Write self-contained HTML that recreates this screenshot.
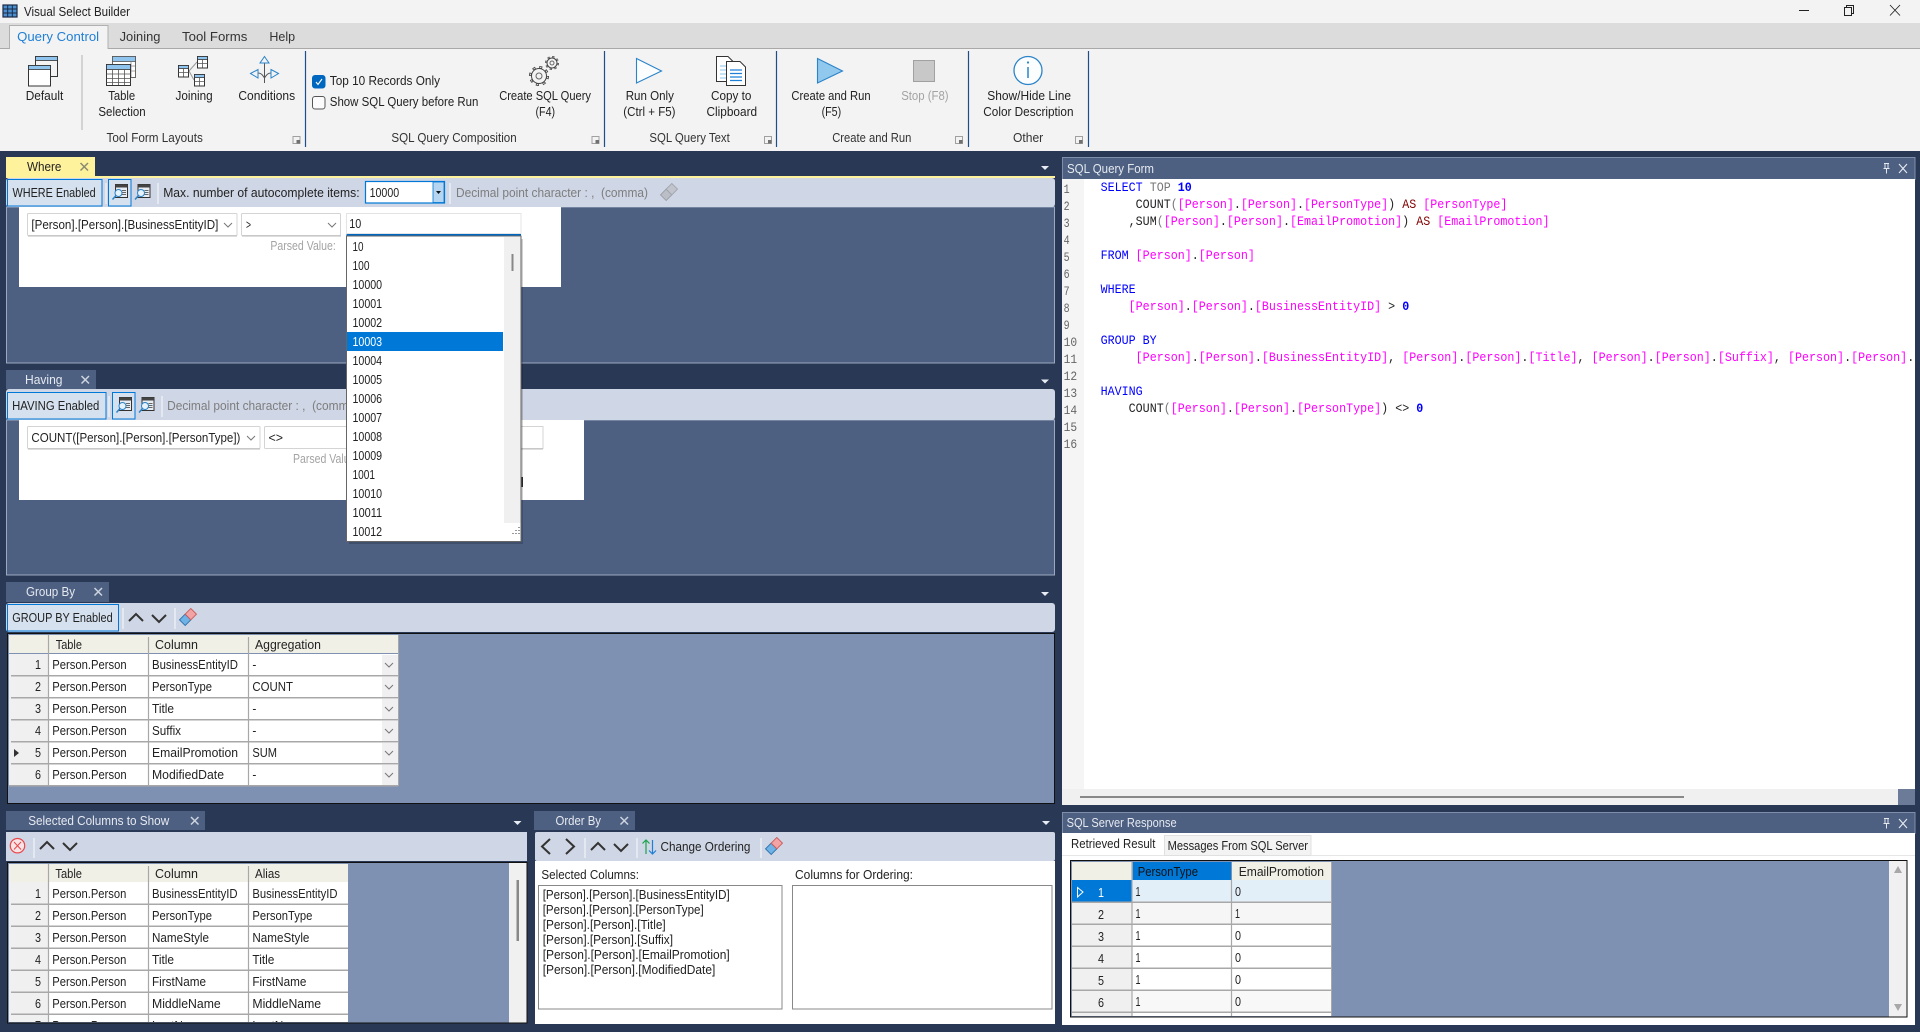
<!DOCTYPE html>
<html><head><meta charset="utf-8"><title>Visual Select Builder</title>
<style>
html,body{margin:0;padding:0;width:1920px;height:1032px;overflow:hidden;background:#293955}
svg{display:block}
text{font-family:"Liberation Sans",sans-serif;font-size:13px;fill:#222;white-space:pre}
.w{fill:#e6e9f0}.gy{fill:#7d7d7d}.lg{fill:#a3a3a3}
.mono text,.mono tspan{font-family:"Liberation Mono",monospace}
.k{fill:#0000ff}.m{fill:#ff00ff}.r{fill:#800000}.g{fill:#777}.d{fill:#222}
</style></head><body>
<svg xmlns="http://www.w3.org/2000/svg" width="1920" height="1032" viewBox="0 0 1920 1032">
<defs>
<clipPath id="ed"><rect x="1062" y="179" width="853" height="610"/></clipPath>
<clipPath id="sc"><rect x="8" y="863" width="518" height="159"/></clipPath>
<clipPath id="rg"><rect x="1072" y="861" width="834" height="155"/></clipPath>
<path id="ch" d="M-4-2L0 2L4-2" fill="none" stroke="#777" stroke-width="1"/>
<path id="cu" d="M-7 3L0-4L7 3" fill="none" stroke="#333" stroke-width="2"/>
<path id="cd" d="M-7-3L0 4L7-3" fill="none" stroke="#333" stroke-width="2"/>
<path id="da" d="M-4-2H4L0 2Z" fill="#e8ecf3"/>
<g id="lau"><rect x="-3.500" y="-3.500" width="7" height="7" fill="none" stroke="#a0a0a0"/><rect x="0" y="0" width="3.500" height="3.500" fill="#707070"/></g>
<g id="srch"><rect x="3.500" y=".5" width="12" height="13" fill="#e8ecf3" stroke="#333"/><rect x="3.500" y=".5" width="12" height="3" fill="#444"/><path d="M10 6.500h4M10 8.500h4M10 10.500h4" stroke="#666"/><circle cx="6.500" cy="9" r="3.500" fill="#e8f2fb" stroke="#2b84c8"/><path d="M4 11.500L.5 15.500" stroke="#2b84c8" stroke-width="1.500"/></g>
<g id="er"><g transform="rotate(-45)"><rect x="-8" y="-4" width="8" height="8" fill="#6fb2e6" stroke="#2b6fa8" stroke-width=".9"/><rect x="0" y="-4" width="8" height="8" fill="#f2a3a3" stroke="#c85a5a" stroke-width=".9"/></g></g>
<g id="tb"><rect x=".5" y=".5" width="10" height="11.500" fill="#fff" stroke="#333"/><rect x=".5" y=".5" width="10" height="3" fill="#8ec4ee" stroke="#333" stroke-width=".8"/><path d="M.5 7.500h10M5.500 3.500v8" stroke="#555" stroke-width=".8"/></g>
</defs>

<!-- title bar -->
<rect width="1920" height="23" fill="#f3f3f3"/>
<rect x="3" y="5" width="14" height="12" fill="#4a90d0" stroke="#1b2a44" stroke-width="1.200"/>
<path d="M3 9h14M3 13h14M7.700 5v12M12.300 5v12" stroke="#1b2a44" stroke-width="1"/>
<text x="24" y="16" textLength="106" lengthAdjust="spacingAndGlyphs">Visual Select Builder</text>
<path d="M1799 10.500h10" stroke="#222" stroke-width="1"/>
<path d="M1844.500 7.500h7v8h-7zM1846.500 7.500v-2h7v8h-2" fill="none" stroke="#222"/>
<path d="M1890 5L1900 15.500M1900 5L1890 15.500" stroke="#222" stroke-width=".9"/>

<!-- tab strip -->
<rect y="23" width="1920" height="25" fill="#dcdcdc"/>
<rect y="48" width="1920" height="1" fill="#a9a9a9"/>
<rect y="49" width="1920" height="102" fill="#f3f3f3"/>
<path d="M9.500 49V25.500H108V49" fill="#f3f3f3" stroke="#b0b0b0"/><rect x="10" y="47" width="97.500" height="3" fill="#f3f3f3"/>
<text x="17.100" y="41" textLength="82" lengthAdjust="spacingAndGlyphs" style="fill:#1e7fd6">Query Control</text>
<text x="119.600" y="41" textLength="40.800" lengthAdjust="spacingAndGlyphs" style="fill:#333">Joining</text>
<text x="182" y="41" textLength="65.300" lengthAdjust="spacingAndGlyphs" style="fill:#333">Tool Forms</text>
<text x="269.400" y="41" textLength="25.700" lengthAdjust="spacingAndGlyphs" style="fill:#333">Help</text>

<!-- ribbon separators -->
<path d="M82 55v75" stroke="#c8c8c8" stroke-width="1.500"/>
<path d="M305.500 51v96M604.500 51v96M776.500 51v96M968.500 51v96M1088.500 51v96" stroke="#1f4e8c" stroke-width="1.200"/>

<!-- default icon -->
<rect x="35.500" y="56.500" width="22" height="20" fill="#f3f3f3" stroke="#333"/><rect x="35.500" y="56.500" width="22" height="4" fill="#8ec4ee" stroke="#333" stroke-width=".8"/>
<rect x="28.500" y="65.500" width="22" height="20.500" fill="#fff" stroke="#333"/><rect x="28.500" y="65.500" width="22" height="4" fill="#8ec4ee" stroke="#333" stroke-width=".8"/>
<text x="25.700" y="100" textLength="37.600" lengthAdjust="spacingAndGlyphs">Default</text>

<!-- table selection icon -->
<rect x="112.500" y="56.500" width="23" height="21" fill="#fff" stroke="#666"/><rect x="112.500" y="56.500" width="23" height="5" fill="#8ec4ee" stroke="#555" stroke-width=".8"/><path d="M131 61v16M112 66h23M112 71h23" stroke="#888" stroke-width=".8"/>
<rect x="106.500" y="64.500" width="24" height="21" fill="#fff" stroke="#333"/><rect x="106.500" y="64.500" width="24" height="5" fill="#8ec4ee" stroke="#333" stroke-width=".8"/>
<path d="M106.500 74h24M106.500 78.500h24M106.500 82.500h24M112.500 70v15M118.500 70v15M124.500 70v15" stroke="#555" stroke-width=".8"/>
<text x="108.200" y="100" textLength="27" lengthAdjust="spacingAndGlyphs">Table</text>
<text x="98.400" y="116" textLength="47.300" lengthAdjust="spacingAndGlyphs">Selection</text>

<!-- joining icon -->
<path d="M189 71L197 62M189 71L194 80" stroke="#999" fill="none"/>
<use href="#tb" x="197" y="56"/><use href="#tb" x="178" y="65"/><use href="#tb" x="194" y="74"/>
<text x="175.500" y="100" textLength="37.200" lengthAdjust="spacingAndGlyphs">Joining</text>

<!-- conditions icon -->
<path d="M264.500 63V83M258 73C262 73 263 76 264.500 78C266 76 267 73 271 73" fill="none" stroke="#555"/>
<path d="M264.500 56.500L269 63H260Z" fill="#f3f3f3" stroke="#2b84c8"/>
<path d="M250.500 73.500L258 69.500V78Z" fill="#f3f3f3" stroke="#2b84c8"/>
<path d="M278.500 73.500L271 69.500V78Z" fill="#f3f3f3" stroke="#2b84c8"/>
<text x="238.400" y="100" textLength="56.700" lengthAdjust="spacingAndGlyphs">Conditions</text>
<text x="106.500" y="142" textLength="96.300" lengthAdjust="spacingAndGlyphs" style="fill:#333">Tool Form Layouts</text>
<use href="#lau" x="296.500" y="140"/>

<!-- checkboxes -->
<rect x="312.500" y="75.500" width="12.500" height="12.500" rx="2.500" fill="#0067c0" stroke="#0067c0"/>
<path d="M316 82L318 84.500L322 79" fill="none" stroke="#fff" stroke-width="1.100"/>
<text x="329.800" y="85" textLength="110.200" lengthAdjust="spacingAndGlyphs">Top 10 Records Only</text>
<rect x="312.500" y="96.500" width="12.500" height="12.500" rx="2.500" fill="#fbfbfb" stroke="#555"/>
<text x="329.800" y="106" textLength="148.600" lengthAdjust="spacingAndGlyphs">Show SQL Query before Run</text>

<!-- gears -->
<g fill="none" stroke="#444">
<circle cx="539" cy="76" r="8.750" stroke-width="2.600" stroke-dasharray="3 3.870"/>
<circle cx="539" cy="76" r="8.750" stroke-width=".9" stroke="#f3f3f3" stroke-dasharray="1.400 5.470" stroke-dashoffset="-.8"/>
<circle cx="539" cy="76" r="7.500" fill="#f3f3f3"/><circle cx="539" cy="76" r="3" stroke="#666"/>
<circle cx="552" cy="63" r="6" stroke-width="2" stroke-dasharray="2.200 2.510"/>
<circle cx="552" cy="63" r="6" stroke-width=".6" stroke="#f3f3f3" stroke-dasharray="1 3.710" stroke-dashoffset="-.6"/>
<circle cx="552" cy="63" r="5" fill="#f3f3f3"/><circle cx="552" cy="63" r="2" stroke="#666"/>
</g>
<text x="499.200" y="100" textLength="91.800" lengthAdjust="spacingAndGlyphs">Create SQL Query</text>
<text x="535.500" y="116" textLength="19.600" lengthAdjust="spacingAndGlyphs">(F4)</text>
<text x="391.400" y="142" textLength="125.300" lengthAdjust="spacingAndGlyphs" style="fill:#333">SQL Query Composition</text>
<use href="#lau" x="595.500" y="140"/>

<!-- run only -->
<path d="M636.500 58.500L661.500 71L636.500 83Z" fill="#fbfdff" stroke="#2b84c8" stroke-width="1.100"/>
<text x="625.700" y="100" textLength="48.200" lengthAdjust="spacingAndGlyphs">Run Only</text>
<text x="623.300" y="116" textLength="52.200" lengthAdjust="spacingAndGlyphs">(Ctrl + F5)</text>

<!-- copy icon -->
<path d="M716.500 56.500H728L733 61.500V81.500H716.500Z" fill="#fff" stroke="#333"/>
<path d="M720 66h6M720 70h6M720 74h6M720 78h6" stroke="#8ec4ee"/>
<path d="M726.500 61.500H740L745.500 67V85.500H726.500Z" fill="#fff" stroke="#333"/>
<path d="M730 70h12M730 73.500h12M730 77h12M730 80.500h12" stroke="#1e7fd6" stroke-width="1.200"/>
<text x="711" y="100" textLength="40.400" lengthAdjust="spacingAndGlyphs">Copy to</text>
<text x="706.500" y="116" textLength="50.600" lengthAdjust="spacingAndGlyphs">Clipboard</text>
<text x="649.400" y="142" textLength="80.400" lengthAdjust="spacingAndGlyphs" style="fill:#333">SQL Query Text</text>
<use href="#lau" x="768" y="140"/>

<!-- create and run -->
<path d="M817.500 58.500L842.500 71L817.500 83Z" fill="#90c8ee" stroke="#2b84c8" stroke-width="1.100"/>
<text x="791.400" y="100" textLength="79.200" lengthAdjust="spacingAndGlyphs">Create and Run</text>
<text x="821.600" y="116" textLength="19.600" lengthAdjust="spacingAndGlyphs">(F5)</text>
<rect x="913.500" y="60.500" width="21" height="21" fill="#c8c8c8" stroke="#a0a0a0"/>
<text x="901.200" y="100" textLength="47.400" lengthAdjust="spacingAndGlyphs" class="lg">Stop (F8)</text>
<text x="832.200" y="142" textLength="79.200" lengthAdjust="spacingAndGlyphs" style="fill:#333">Create and Run</text>
<use href="#lau" x="959" y="140"/>

<!-- info -->
<circle cx="1028" cy="70.500" r="14" fill="#fbfdff" stroke="#2b84c8" stroke-width="1.300"/>
<path d="M1028 67v11" stroke="#2b84c8" stroke-width="1.500"/><circle cx="1028" cy="62.500" r="1.100" fill="#2b84c8"/>
<text x="987.300" y="100" textLength="83.700" lengthAdjust="spacingAndGlyphs">Show/Hide Line</text>
<text x="983.300" y="116" textLength="90.200" lengthAdjust="spacingAndGlyphs">Color Description</text>
<text x="1013" y="142" textLength="30.200" lengthAdjust="spacingAndGlyphs" style="fill:#333">Other</text>
<use href="#lau" x="1079" y="140"/>

<!-- WHERE PANEL -->
<rect x="6" y="157" width="89" height="19" fill="#fff29d"/>
<text x="27" y="171" textLength="34.400" lengthAdjust="spacingAndGlyphs">Where</text>
<path d="M80.500 163L88 170.500M88 163L80.500 170.500" stroke="#8a8a70" stroke-width="1.500"/>
<rect x="6" y="176" width="1049" height="2" fill="#fff29d"/>
<rect x="6.500" y="207" width="1048" height="156" fill="#4d6082" stroke="#9aa8c0"/>
<rect x="6" y="178" width="1049" height="29" rx="3" fill="#cfd6e5"/>
<rect x="7.500" y="179.500" width="94.500" height="26.500" fill="#d5e1ef" stroke="#0078d7"/>
<text x="12.500" y="197" textLength="83.200" lengthAdjust="spacingAndGlyphs">WHERE Enabled</text>
<path d="M106 183v21M158 183v21M450 183v21" stroke="#f2f4f8" stroke-width="1.200"/>
<rect x="108.500" y="179.500" width="22.500" height="26.500" fill="#d5e1ef" stroke="#0078d7"/>
<use href="#srch" x="112" y="184"/><use href="#srch" x="134.500" y="184"/>
<text x="163.200" y="197" textLength="196.400" lengthAdjust="spacingAndGlyphs">Max. number of autocomplete items:</text>
<rect x="365.500" y="181.500" width="79" height="21.500" fill="#fff" stroke="#0078d7" stroke-width="1.200"/>
<rect x="433" y="182" width="11" height="20.500" fill="#b5d5f0" stroke="#0078d7" stroke-width=".8"/>
<path d="M436 191h5l-2.500 3z" fill="#111"/>
<text x="369.600" y="197" textLength="29.600" lengthAdjust="spacingAndGlyphs">10000</text>
<text x="456" y="197" textLength="192" lengthAdjust="spacingAndGlyphs" class="gy">Decimal point character : ,  (comma)</text>
<g transform="translate(669 192)" opacity=".5" style="filter:grayscale(1)"><use href="#er"/></g>
<use href="#da" x="1045" y="168"/>
<rect x="19" y="207" width="542" height="80" fill="#fff"/>
<rect x="27.500" y="213.500" width="209.500" height="22" rx="1" fill="#fff" stroke="#d4d4d4"/><path d="M28 236h209" stroke="#bbb"/>
<text x="31.400" y="229" textLength="187" lengthAdjust="spacingAndGlyphs">[Person].[Person].[BusinessEntityID]</text>
<use href="#ch" x="228" y="225"/>
<rect x="241.500" y="213.500" width="99" height="22" rx="1" fill="#fff" stroke="#d4d4d4"/><path d="M242 236h99" stroke="#bbb"/>
<text x="246" y="229" textLength="5" lengthAdjust="spacingAndGlyphs">&gt;</text>
<use href="#ch" x="332" y="225"/>
<rect x="346.500" y="213.500" width="174.500" height="20" fill="#fff" stroke="#e4e4e4"/><rect x="346.500" y="234" width="174.500" height="2" fill="#0067c0"/>
<text x="349.300" y="228" textLength="12" lengthAdjust="spacingAndGlyphs">10</text>
<text x="270.400" y="250" textLength="65.400" lengthAdjust="spacingAndGlyphs" class="lg">Parsed Value:</text>

<!-- HAVING PANEL -->
<rect x="6" y="370" width="90" height="19" fill="#4d6082"/>
<text x="25" y="384" textLength="37.500" lengthAdjust="spacingAndGlyphs" class="w">Having</text>
<path d="M81.500 376L89 383.500M89 376L81.500 383.500" stroke="#cdd3df" stroke-width="1.500"/>
<rect x="6.500" y="420" width="1048" height="155" fill="#4d6082" stroke="#9aa8c0"/>
<rect x="6" y="389" width="1049" height="31" rx="3" fill="#cfd6e5"/>
<rect x="7.500" y="392.500" width="98.500" height="26.500" fill="#d5e1ef" stroke="#0078d7"/>
<text x="12.100" y="410" textLength="87.200" lengthAdjust="spacingAndGlyphs">HAVING Enabled</text>
<path d="M109 396v21M162 396v21" stroke="#f2f4f8" stroke-width="1.200"/>
<rect x="112.500" y="392.500" width="22.500" height="26.500" fill="#d5e1ef" stroke="#0078d7"/>
<use href="#srch" x="116" y="397"/><use href="#srch" x="138.500" y="397"/>
<text x="167.100" y="410" textLength="192" lengthAdjust="spacingAndGlyphs" class="gy">Decimal point character : ,  (comma)</text>
<use href="#da" x="1045" y="381.500"/>
<rect x="19" y="420" width="565" height="80" fill="#fff"/>
<rect x="27.500" y="426.500" width="232.500" height="22" rx="1" fill="#fff" stroke="#d4d4d4"/><path d="M28 449h232" stroke="#bbb"/>
<text x="31.400" y="442" textLength="209" lengthAdjust="spacingAndGlyphs">COUNT([Person].[Person].[PersonType])</text>
<use href="#ch" x="251" y="438"/>
<rect x="264.500" y="426.500" width="100" height="22" rx="1" fill="#fff" stroke="#d4d4d4"/>
<text x="268.500" y="442" textLength="14.500" lengthAdjust="spacingAndGlyphs">&lt;&gt;</text>
<rect x="370" y="426.500" width="173" height="22" fill="#fff" stroke="#d4d4d4"/><path d="M370 449h173" stroke="#bbb"/>
<text x="293" y="463" textLength="65.400" lengthAdjust="spacingAndGlyphs" class="lg">Parsed Value:</text>
<rect x="521" y="477" width="2" height="10" fill="#333"/>

<!-- GROUP BY PANEL -->
<rect x="6" y="582" width="103" height="20" fill="#4d6082"/>
<text x="26" y="596" textLength="49" lengthAdjust="spacingAndGlyphs" class="w">Group By</text>
<path d="M94.500 588L102 595.500M102 588L94.500 595.500" stroke="#cdd3df" stroke-width="1.500"/>
<use href="#da" x="1045" y="594"/>
<rect x="6" y="603" width="1049" height="29" rx="3" fill="#cfd6e5"/>
<rect x="7.500" y="604.500" width="111" height="26.500" fill="#d5e1ef" stroke="#0078d7"/>
<text x="12.300" y="622" textLength="100.400" lengthAdjust="spacingAndGlyphs">GROUP BY Enabled</text>
<path d="M123 608v21M175 608v21" stroke="#f2f4f8" stroke-width="1.200"/>
<use href="#cu" x="136" y="618"/><use href="#cd" x="159" y="618"/>
<use href="#er" x="188" y="617"/>
<rect x="7.500" y="633.500" width="1047" height="170" fill="#7f91b2" stroke="#111"/>
<rect x="9" y="635" width="389" height="18" fill="#f1f0e6"/>
<rect x="9" y="654" width="39" height="132" fill="#f0f0f0"/>
<rect x="49" y="654" width="349" height="132" fill="#fff"/>
<path d="M48.500 635v151M148.500 637v149M248.500 637v149" stroke="#a8a8a8" stroke-width="1.200"/>
<path d="M398.500 635v151" stroke="#a8a8a8"/>
<g fill="#f0f0f0"><rect x="382" y="655" width="16" height="20"/><rect x="382" y="677" width="16" height="20"/><rect x="382" y="699" width="16" height="20"/><rect x="382" y="721" width="16" height="20"/><rect x="382" y="743" width="16" height="20"/><rect x="382" y="765" width="16" height="20"/></g>
<path d="M11 675.700H398M11 697.700H398M11 719.700H398M11 741.700H398M11 763.700H398M9 785.700H398" stroke="#a8a8a8" stroke-width="1.500"/>
<use href="#ch" x="389" y="665"/><use href="#ch" x="389" y="687"/><use href="#ch" x="389" y="709"/><use href="#ch" x="389" y="731"/><use href="#ch" x="389" y="753"/><use href="#ch" x="389" y="775"/>
<path d="M14 749L19 753L14 757Z" fill="#333"/>
<text x="55.700" y="649" textLength="26.300" lengthAdjust="spacingAndGlyphs">Table</text>
<text x="155" y="649" textLength="43" lengthAdjust="spacingAndGlyphs">Column</text>
<text x="255" y="649" textLength="66" lengthAdjust="spacingAndGlyphs">Aggregation</text>
<text x="35" y="669" textLength="6" lengthAdjust="spacingAndGlyphs">1</text>
<text x="35" y="691" textLength="6" lengthAdjust="spacingAndGlyphs">2</text>
<text x="35" y="713" textLength="6" lengthAdjust="spacingAndGlyphs">3</text>
<text x="35" y="735" textLength="6" lengthAdjust="spacingAndGlyphs">4</text>
<text x="35" y="757" textLength="6" lengthAdjust="spacingAndGlyphs">5</text>
<text x="35" y="779" textLength="6" lengthAdjust="spacingAndGlyphs">6</text>
<text x="52.300" y="669" textLength="74.400" lengthAdjust="spacingAndGlyphs">Person.Person</text>
<text x="52.300" y="691" textLength="74.400" lengthAdjust="spacingAndGlyphs">Person.Person</text>
<text x="52.300" y="713" textLength="74.400" lengthAdjust="spacingAndGlyphs">Person.Person</text>
<text x="52.300" y="735" textLength="74.400" lengthAdjust="spacingAndGlyphs">Person.Person</text>
<text x="52.300" y="757" textLength="74.400" lengthAdjust="spacingAndGlyphs">Person.Person</text>
<text x="52.300" y="779" textLength="74.400" lengthAdjust="spacingAndGlyphs">Person.Person</text>
<text x="152" y="669" textLength="86" lengthAdjust="spacingAndGlyphs">BusinessEntityID</text>
<text x="152" y="691" textLength="60" lengthAdjust="spacingAndGlyphs">PersonType</text>
<text x="152" y="713" textLength="22" lengthAdjust="spacingAndGlyphs">Title</text>
<text x="152" y="735" textLength="29" lengthAdjust="spacingAndGlyphs">Suffix</text>
<text x="152" y="757" textLength="86" lengthAdjust="spacingAndGlyphs">EmailPromotion</text>
<text x="152" y="779" textLength="72" lengthAdjust="spacingAndGlyphs">ModifiedDate</text>
<text x="252.400" y="669" textLength="4" lengthAdjust="spacingAndGlyphs">-</text>
<text x="252.400" y="691" textLength="40.600" lengthAdjust="spacingAndGlyphs">COUNT</text>
<text x="252.400" y="713" textLength="4" lengthAdjust="spacingAndGlyphs">-</text>
<text x="252.400" y="735" textLength="4" lengthAdjust="spacingAndGlyphs">-</text>
<text x="252.400" y="757" textLength="24.600" lengthAdjust="spacingAndGlyphs">SUM</text>
<text x="252.400" y="779" textLength="4" lengthAdjust="spacingAndGlyphs">-</text>

<!-- SELECTED COLUMNS -->
<rect x="6" y="811" width="199" height="19" fill="#4d6082"/>
<text x="28.200" y="825" textLength="141" lengthAdjust="spacingAndGlyphs" class="w">Selected Columns to Show</text>
<path d="M191 817L198.500 824.500M198.500 817L191 824.500" stroke="#cdd3df" stroke-width="1.500"/>
<use href="#da" x="517.500" y="823"/>
<rect x="6" y="832" width="521" height="29" fill="#cfd6e5"/>
<circle cx="17.500" cy="845.700" r="7.200" fill="#f8e4e4" stroke="#e8474c" stroke-width="1.200"/>
<path d="M14 842L21 849.500M21 842L14 849.500" stroke="#e8474c"/>
<path d="M34 838v20" stroke="#f2f4f8" stroke-width="1.200"/>
<use href="#cu" x="47" y="846"/><use href="#cd" x="70" y="846"/>
<rect x="7.500" y="862.500" width="519.500" height="160.500" fill="#7f91b2" stroke="#111"/>
<rect x="509" y="863" width="17.500" height="159.500" fill="#f0f0f0"/>
<rect x="516.500" y="880" width="2.500" height="61" fill="#888"/>
<g clip-path="url(#sc)">
<rect x="9" y="864" width="339" height="18" fill="#f1f0e6"/>
<rect x="9" y="882" width="39" height="145" fill="#f0f0f0"/>
<rect x="49" y="882" width="299" height="145" fill="#fff"/>
<path d="M48.500 864v160M148.500 866v160M248.500 866v160" stroke="#a8a8a8" stroke-width="1.200"/>
<path d="M11 904.300H348M11 926.300H348M11 948.300H348M11 970.300H348M11 992.300H348M11 1014.300H348" stroke="#a8a8a8" stroke-width="1.500"/>
<text x="55.400" y="878" textLength="26.600" lengthAdjust="spacingAndGlyphs">Table</text>
<text x="155" y="878" textLength="43" lengthAdjust="spacingAndGlyphs">Column</text>
<text x="255" y="878" textLength="25" lengthAdjust="spacingAndGlyphs">Alias</text>
<text x="35" y="898" textLength="6" lengthAdjust="spacingAndGlyphs">1</text>
<text x="35" y="920" textLength="6" lengthAdjust="spacingAndGlyphs">2</text>
<text x="35" y="942" textLength="6" lengthAdjust="spacingAndGlyphs">3</text>
<text x="35" y="964" textLength="6" lengthAdjust="spacingAndGlyphs">4</text>
<text x="35" y="986" textLength="6" lengthAdjust="spacingAndGlyphs">5</text>
<text x="35" y="1008" textLength="6" lengthAdjust="spacingAndGlyphs">6</text>
<text x="35" y="1030" textLength="6" lengthAdjust="spacingAndGlyphs">7</text>
<text x="52.300" y="898" textLength="74" lengthAdjust="spacingAndGlyphs">Person.Person</text>
<text x="52.300" y="920" textLength="74" lengthAdjust="spacingAndGlyphs">Person.Person</text>
<text x="52.300" y="942" textLength="74" lengthAdjust="spacingAndGlyphs">Person.Person</text>
<text x="52.300" y="964" textLength="74" lengthAdjust="spacingAndGlyphs">Person.Person</text>
<text x="52.300" y="986" textLength="74" lengthAdjust="spacingAndGlyphs">Person.Person</text>
<text x="52.300" y="1008" textLength="74" lengthAdjust="spacingAndGlyphs">Person.Person</text>
<text x="52.300" y="1030" textLength="74" lengthAdjust="spacingAndGlyphs">Person.Person</text>
<text x="152" y="898" textLength="85.600" lengthAdjust="spacingAndGlyphs">BusinessEntityID</text>
<text x="152" y="920" textLength="60" lengthAdjust="spacingAndGlyphs">PersonType</text>
<text x="152" y="942" textLength="57" lengthAdjust="spacingAndGlyphs">NameStyle</text>
<text x="152" y="964" textLength="22" lengthAdjust="spacingAndGlyphs">Title</text>
<text x="152" y="986" textLength="54" lengthAdjust="spacingAndGlyphs">FirstName</text>
<text x="152" y="1008" textLength="68.700" lengthAdjust="spacingAndGlyphs">MiddleName</text>
<text x="152" y="1030" textLength="54" lengthAdjust="spacingAndGlyphs">LastName</text>
<text x="252.400" y="898" textLength="85.100" lengthAdjust="spacingAndGlyphs">BusinessEntityID</text>
<text x="252.400" y="920" textLength="60" lengthAdjust="spacingAndGlyphs">PersonType</text>
<text x="252.400" y="942" textLength="57" lengthAdjust="spacingAndGlyphs">NameStyle</text>
<text x="252.400" y="964" textLength="22" lengthAdjust="spacingAndGlyphs">Title</text>
<text x="252.400" y="986" textLength="54" lengthAdjust="spacingAndGlyphs">FirstName</text>
<text x="252.400" y="1008" textLength="68.700" lengthAdjust="spacingAndGlyphs">MiddleName</text>
<text x="252.400" y="1030" textLength="54" lengthAdjust="spacingAndGlyphs">LastName</text>
</g>

<!-- ORDER BY -->
<rect x="534" y="811" width="101" height="19" fill="#4d6082"/>
<text x="555.500" y="825" textLength="45.500" lengthAdjust="spacingAndGlyphs" class="w">Order By</text>
<path d="M620.500 817L628 824.500M628 817L620.500 824.500" stroke="#cdd3df" stroke-width="1.500"/>
<use href="#da" x="1046" y="823"/>
<rect x="535" y="861" width="520" height="163" fill="#fff"/>
<rect x="535" y="832" width="520" height="29" rx="2" fill="#cfd6e5"/>
<path d="M550 839L542 846.500L550 854M566 839L574 846.500L566 854" fill="none" stroke="#333" stroke-width="2"/>
<path d="M585 838v20M637 838v20M761 838v20" stroke="#f2f4f8" stroke-width="1.200"/>
<use href="#cu" x="598" y="847"/><use href="#cd" x="621" y="847"/>
<path d="M646 854V840M642.500 843.500L646 840L649.500 843.500" fill="none" stroke="#1aa34a" stroke-width="1.200"/>
<path d="M652.500 840V854M649 850.500L652.500 854L656 850.500" fill="none" stroke="#1e7fd6" stroke-width="1.200"/>
<text x="660.500" y="851" textLength="89.900" lengthAdjust="spacingAndGlyphs">Change Ordering</text>
<use href="#er" x="774" y="846"/>
<text x="541.400" y="879" textLength="97.600" lengthAdjust="spacingAndGlyphs">Selected Columns:</text>
<text x="795" y="879" textLength="118" lengthAdjust="spacingAndGlyphs">Columns for Ordering:</text>
<rect x="538.500" y="885.500" width="243.500" height="123.500" fill="#fff" stroke="#888"/>
<rect x="792.500" y="885.500" width="259.500" height="123.500" fill="#fff" stroke="#888"/>
<text x="542.700" y="899" textLength="187" lengthAdjust="spacingAndGlyphs">[Person].[Person].[BusinessEntityID]</text>
<text x="542.700" y="914" textLength="161" lengthAdjust="spacingAndGlyphs">[Person].[Person].[PersonType]</text>
<text x="542.700" y="929" textLength="123" lengthAdjust="spacingAndGlyphs">[Person].[Person].[Title]</text>
<text x="542.700" y="944" textLength="130.300" lengthAdjust="spacingAndGlyphs">[Person].[Person].[Suffix]</text>
<text x="542.700" y="959" textLength="187" lengthAdjust="spacingAndGlyphs">[Person].[Person].[EmailPromotion]</text>
<text x="542.700" y="974" textLength="172.600" lengthAdjust="spacingAndGlyphs">[Person].[Person].[ModifiedDate]</text>

<!-- SQL QUERY FORM -->
<rect x="1062.500" y="157.500" width="852.500" height="22" fill="#4d6082" stroke="#7f8fab"/>
<text x="1067" y="173" textLength="87" lengthAdjust="spacingAndGlyphs" class="w">SQL Query Form</text>
<g stroke="#e6e9f0" fill="none"><path d="M1884 163.500h5M1885 163.500v5h3v-5M1883.500 168.500h6M1886.500 168.500v5"/><path d="M1899 164L1907 173M1907 164L1899 173" stroke-width="1.100"/></g>
<rect x="1062" y="179" width="853" height="610" fill="#fff"/>
<rect x="1062" y="179" width="22" height="610" fill="#f5f5f5"/>
<g class="mono" font-size="13">
<g style="fill:#666;font-size:12px">
<text x="1063.600" y="193" textLength="6" lengthAdjust="spacingAndGlyphs" style="fill:#666">1</text>
<text x="1063.600" y="210" textLength="6" lengthAdjust="spacingAndGlyphs" style="fill:#666">2</text>
<text x="1063.600" y="227" textLength="6" lengthAdjust="spacingAndGlyphs" style="fill:#666">3</text>
<text x="1063.600" y="244" textLength="6" lengthAdjust="spacingAndGlyphs" style="fill:#666">4</text>
<text x="1063.600" y="261" textLength="6" lengthAdjust="spacingAndGlyphs" style="fill:#666">5</text>
<text x="1063.600" y="278" textLength="6" lengthAdjust="spacingAndGlyphs" style="fill:#666">6</text>
<text x="1063.600" y="295" textLength="6" lengthAdjust="spacingAndGlyphs" style="fill:#666">7</text>
<text x="1063.600" y="312" textLength="6" lengthAdjust="spacingAndGlyphs" style="fill:#666">8</text>
<text x="1063.600" y="329" textLength="6" lengthAdjust="spacingAndGlyphs" style="fill:#666">9</text>
<text x="1063.600" y="346" textLength="13.500" lengthAdjust="spacingAndGlyphs" style="fill:#666">10</text>
<text x="1063.600" y="363" textLength="13.500" lengthAdjust="spacingAndGlyphs" style="fill:#666">11</text>
<text x="1063.600" y="380" textLength="13.500" lengthAdjust="spacingAndGlyphs" style="fill:#666">12</text>
<text x="1063.600" y="397" textLength="13.500" lengthAdjust="spacingAndGlyphs" style="fill:#666">13</text>
<text x="1063.600" y="414" textLength="13.500" lengthAdjust="spacingAndGlyphs" style="fill:#666">14</text>
<text x="1063.600" y="431" textLength="13.500" lengthAdjust="spacingAndGlyphs" style="fill:#666">15</text>
<text x="1063.600" y="448" textLength="13.500" lengthAdjust="spacingAndGlyphs" style="fill:#666">16</text>
</g>
<g clip-path="url(#ed)"><g transform="translate(1100.600 0) scale(.899 1)">
<text y="191"><tspan class="k">SELECT</tspan> <tspan class="g">TOP</tspan> <tspan class="k" font-weight="bold">10</tspan></text>
<text y="208">     <tspan class="d">COUNT</tspan><tspan class="g">(</tspan><tspan class="m">[Person]</tspan><tspan class="d">.</tspan><tspan class="m">[Person]</tspan><tspan class="d">.</tspan><tspan class="m">[PersonType]</tspan><tspan class="d">)</tspan> <tspan class="r">AS</tspan> <tspan class="m">[PersonType]</tspan></text>
<text y="225">    <tspan class="d">,SUM</tspan><tspan class="g">(</tspan><tspan class="m">[Person]</tspan><tspan class="d">.</tspan><tspan class="m">[Person]</tspan><tspan class="d">.</tspan><tspan class="m">[EmailPromotion]</tspan><tspan class="d">)</tspan> <tspan class="r">AS</tspan> <tspan class="m">[EmailPromotion]</tspan></text>
<text y="259"><tspan class="k">FROM</tspan> <tspan class="m">[Person]</tspan><tspan class="d">.</tspan><tspan class="m">[Person]</tspan></text>
<text y="293"><tspan class="k">WHERE</tspan></text>
<text y="310">    <tspan class="m">[Person]</tspan><tspan class="d">.</tspan><tspan class="m">[Person]</tspan><tspan class="d">.</tspan><tspan class="m">[BusinessEntityID]</tspan> <tspan class="d">&gt;</tspan> <tspan class="k" font-weight="bold">0</tspan></text>
<text y="344"><tspan class="k">GROUP BY</tspan></text>
<text y="361">     <tspan class="m">[Person]</tspan><tspan class="d">.</tspan><tspan class="m">[Person]</tspan><tspan class="d">.</tspan><tspan class="m">[BusinessEntityID]</tspan><tspan class="d">,</tspan> <tspan class="m">[Person]</tspan><tspan class="d">.</tspan><tspan class="m">[Person]</tspan><tspan class="d">.</tspan><tspan class="m">[Title]</tspan><tspan class="d">,</tspan> <tspan class="m">[Person]</tspan><tspan class="d">.</tspan><tspan class="m">[Person]</tspan><tspan class="d">.</tspan><tspan class="m">[Suffix]</tspan><tspan class="d">,</tspan> <tspan class="m">[Person]</tspan><tspan class="d">.</tspan><tspan class="m">[Person]</tspan><tspan class="d">.</tspan></text>
<text y="395"><tspan class="k">HAVING</tspan></text>
<text y="412">    <tspan class="d">COUNT</tspan><tspan class="g">(</tspan><tspan class="m">[Person]</tspan><tspan class="d">.</tspan><tspan class="m">[Person]</tspan><tspan class="d">.</tspan><tspan class="m">[PersonType]</tspan><tspan class="d">)</tspan> <tspan class="d">&lt;&gt;</tspan> <tspan class="k" font-weight="bold">0</tspan></text>
</g></g>
</g>
<rect x="1062" y="789" width="853" height="16" fill="#f0f0f0"/>
<rect x="1080" y="796" width="604" height="2" fill="#888"/>
<rect x="1898" y="789" width="17" height="16" fill="#6c7c98"/>

<!-- SQL SERVER RESPONSE -->
<rect x="1062.500" y="812.500" width="852.500" height="21" fill="#4d6082" stroke="#7f8fab"/>
<text x="1066.600" y="827" textLength="110" lengthAdjust="spacingAndGlyphs" class="w">SQL Server Response</text>
<g stroke="#e6e9f0" fill="none"><path d="M1884 818.500h5M1885 818.500v5h3v-5M1883.500 823.500h6M1886.500 823.500v5"/><path d="M1899 819L1907 828M1907 819L1899 828" stroke-width="1.100"/></g>
<rect x="1062" y="833" width="853" height="192" fill="#fff"/>
<rect x="1164.500" y="835.500" width="146.500" height="20" fill="#f3f3f3" stroke="#e0e0e0"/>
<text x="1071" y="848" textLength="84.400" lengthAdjust="spacingAndGlyphs">Retrieved Result</text>
<text x="1167.600" y="850" textLength="140.400" lengthAdjust="spacingAndGlyphs">Messages From SQL Server</text>
<path d="M1062 855.500H1164M1311 855.500H1915" stroke="#e6e6e6"/>
<rect x="1070.500" y="860.500" width="836.500" height="156.500" fill="#7f91b2" stroke="#111"/>
<rect x="1889" y="861" width="17.500" height="155.500" fill="#f0f0f0"/>
<path d="M1894 873L1898 866L1902 873ZM1894 1004L1898 1011L1902 1004Z" fill="#a8a8a8"/>
<g clip-path="url(#rg)">
<rect x="1072" y="862" width="60" height="18" fill="#f1f0e6"/>
<rect x="1133" y="862" width="98" height="18" fill="#0078d7"/>
<rect x="1232" y="862" width="99" height="18" fill="#f1f0e6"/>
<rect x="1072" y="880" width="60" height="140" fill="#f0f0f0"/>
<rect x="1072" y="880" width="60" height="22" fill="#0078d7"/>
<rect x="1132" y="880" width="199" height="140" fill="#fff"/>
<rect x="1132" y="880" width="199" height="22" fill="#e3eff8"/>
<rect x="1132" y="902" width="199" height="22" fill="#f6f6f6"/>
<rect x="1132" y="990" width="199" height="22" fill="#f8f8f8"/>
<path d="M1132 862v155M1231.500 880v137" stroke="#a8a8a8" stroke-width="1.200"/>
<path d="M1331.500 862v155" stroke="#a8a8a8"/>
<path d="M1072 902.300H1331M1072 924.300H1331M1072 946.300H1331M1072 968.300H1331M1072 990.300H1331M1072 1012.300H1331" stroke="#a8a8a8" stroke-width="1.500"/>
<path d="M1077.500 887.500L1083 892L1077.500 897Z" fill="#0078d7" stroke="#fff"/>
</g>
<text x="1137.700" y="876" textLength="60.300" lengthAdjust="spacingAndGlyphs" style="fill:#111">PersonType</text>
<text x="1238.700" y="876" textLength="85.300" lengthAdjust="spacingAndGlyphs">EmailPromotion</text>
<text x="1098" y="897" textLength="6" lengthAdjust="spacingAndGlyphs" style="fill:#fff">1</text>
<text x="1098" y="919" textLength="6" lengthAdjust="spacingAndGlyphs">2</text>
<text x="1098" y="941" textLength="6" lengthAdjust="spacingAndGlyphs">3</text>
<text x="1098" y="963" textLength="6" lengthAdjust="spacingAndGlyphs">4</text>
<text x="1098" y="985" textLength="6" lengthAdjust="spacingAndGlyphs">5</text>
<text x="1098" y="1007" textLength="6" lengthAdjust="spacingAndGlyphs">6</text>
<text x="1135.500" y="896" textLength="5" lengthAdjust="spacingAndGlyphs">1</text>
<text x="1135.500" y="918" textLength="5" lengthAdjust="spacingAndGlyphs">1</text>
<text x="1135.500" y="940" textLength="5" lengthAdjust="spacingAndGlyphs">1</text>
<text x="1135.500" y="962" textLength="5" lengthAdjust="spacingAndGlyphs">1</text>
<text x="1135.500" y="984" textLength="5" lengthAdjust="spacingAndGlyphs">1</text>
<text x="1135.500" y="1006" textLength="5" lengthAdjust="spacingAndGlyphs">1</text>
<text x="1235" y="896" textLength="6" lengthAdjust="spacingAndGlyphs">0</text>
<text x="1235" y="918" textLength="5" lengthAdjust="spacingAndGlyphs">1</text>
<text x="1235" y="940" textLength="6" lengthAdjust="spacingAndGlyphs">0</text>
<text x="1235" y="962" textLength="6" lengthAdjust="spacingAndGlyphs">0</text>
<text x="1235" y="984" textLength="6" lengthAdjust="spacingAndGlyphs">0</text>
<text x="1235" y="1006" textLength="6" lengthAdjust="spacingAndGlyphs">0</text>

<!-- AUTOCOMPLETE DROPDOWN -->
<rect x="349" y="239" width="174" height="305" fill="#000" opacity=".18"/>
<rect x="346.500" y="236" width="174.500" height="305.500" fill="#fff" stroke="#666"/>
<rect x="504" y="237" width="16.500" height="286" fill="#f0f0f0"/>
<rect x="511.500" y="254" width="2" height="17" fill="#888"/>
<rect x="347" y="332" width="156" height="19" fill="#0078d7"/>
<path d="M519 527v1M516 530v1M519 530v1M513 533v1M516 533v1M519 533v1" stroke="#999" stroke-width="2"/>
<text x="352.500" y="251" textLength="11" lengthAdjust="spacingAndGlyphs">10</text>
<text x="352.500" y="270" textLength="17" lengthAdjust="spacingAndGlyphs">100</text>
<text x="352.500" y="289" textLength="29.600" lengthAdjust="spacingAndGlyphs">10000</text>
<text x="352.500" y="308" textLength="29.600" lengthAdjust="spacingAndGlyphs">10001</text>
<text x="352.500" y="327" textLength="29.600" lengthAdjust="spacingAndGlyphs">10002</text>
<text x="352.500" y="346" textLength="29.600" lengthAdjust="spacingAndGlyphs" style="fill:#fff">10003</text>
<text x="352.500" y="365" textLength="29.600" lengthAdjust="spacingAndGlyphs">10004</text>
<text x="352.500" y="384" textLength="29.600" lengthAdjust="spacingAndGlyphs">10005</text>
<text x="352.500" y="403" textLength="29.600" lengthAdjust="spacingAndGlyphs">10006</text>
<text x="352.500" y="422" textLength="29.600" lengthAdjust="spacingAndGlyphs">10007</text>
<text x="352.500" y="441" textLength="29.600" lengthAdjust="spacingAndGlyphs">10008</text>
<text x="352.500" y="460" textLength="29.600" lengthAdjust="spacingAndGlyphs">10009</text>
<text x="352.500" y="479" textLength="22.500" lengthAdjust="spacingAndGlyphs">1001</text>
<text x="352.500" y="498" textLength="29.600" lengthAdjust="spacingAndGlyphs">10010</text>
<text x="352.500" y="517" textLength="29.600" lengthAdjust="spacingAndGlyphs">10011</text>
<text x="352.500" y="536" textLength="29.600" lengthAdjust="spacingAndGlyphs">10012</text>
</svg>
</body></html>
